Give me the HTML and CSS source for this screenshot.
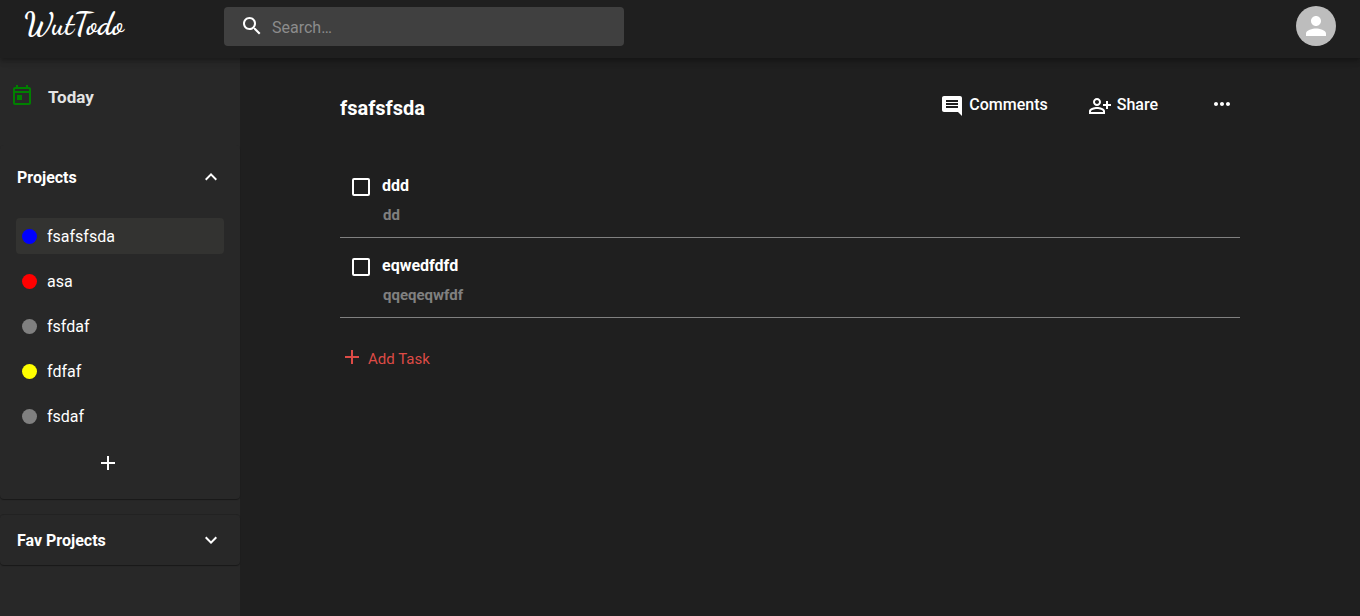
FILE: index.html
```html
<!DOCTYPE html>
<html lang="en">
<head>
<meta charset="utf-8">
<title>WutTodo</title>
<link rel="stylesheet" href="styles.css">
</head>
<body>
<header class="topbar">
  <a class="logo" href="#">WutTodo</a>
  <label class="search">
    <svg class="icon" viewBox="0 0 24 24" aria-hidden="true"><path d="M15.5 14h-.79l-.28-.27C15.41 12.59 16 11.11 16 9.5 16 5.91 13.09 3 9.5 3S3 5.91 3 9.5 5.91 16 9.5 16c1.61 0 3.09-.59 4.23-1.57l.27.28v.79l5 4.99L20.49 19l-4.99-5zm-6 0C7.01 14 5 11.99 5 9.5S7.01 5 9.5 5 14 7.01 14 9.5 11.99 14 9.5 14z"/></svg>
    <input class="search-input" type="text" placeholder="Search…" aria-label="Search">
  </label>
  <button class="avatar" type="button" aria-label="Account">
    <svg class="avatar-icon" viewBox="0 0 24 24" aria-hidden="true"><path d="M12 12c2.21 0 4-1.79 4-4s-1.79-4-4-4-4 1.79-4 4 1.79 4 4 4zm0 2c-2.67 0-8 1.34-8 4v2h16v-2c0-2.66-5.33-4-8-4z"/></svg>
  </button>
</header>
<div class="layout">
  <nav class="sidebar">
    <a class="today" href="#">
      <svg class="icon today-icon" viewBox="0 0 24 24" aria-hidden="true"><path d="M19 3h-1V1h-2v2H8V1H6v2H5c-1.11 0-1.99.9-1.99 2L3 19c0 1.100.89 2 2 2h14c1.100 0 2-.9 2-2V5c0-1.100-.9-2-2-2zm0 16H5V9h14v10zm0-12H5V5h14v2zM7 11h5v5H7z"/></svg>
      <span class="today-label">Today</span>
    </a>
    <section class="panel projects">
      <button class="panel-head" type="button" aria-expanded="true">
        <span class="label">Projects</span>
        <svg class="icon" viewBox="0 0 24 24" aria-hidden="true"><path d="M12 8l-6 6 1.410 1.410L12 10.830l4.590 4.580L18 14z"/></svg>
      </button>
      <div class="project-list">
        <a class="project selected" href="#"><span class="dot blue"></span><span class="label">fsafsfsda</span></a>
        <a class="project" href="#"><span class="dot red"></span><span class="label">asa</span></a>
        <a class="project" href="#"><span class="dot gray"></span><span class="label">fsfdaf</span></a>
        <a class="project" href="#"><span class="dot yellow"></span><span class="label">fdfaf</span></a>
        <a class="project" href="#"><span class="dot gray"></span><span class="label">fsdaf</span></a>
      </div>
      <button class="add-project" type="button" aria-label="Add project">
        <svg class="icon" viewBox="0 0 24 24" aria-hidden="true"><path d="M19 13h-6v6h-2v-6H5v-2h6V5h2v6h6v2z"/></svg>
      </button>
    </section>
    <section class="panel favorites">
      <button class="panel-head" type="button" aria-expanded="false">
        <span class="label">Fav Projects</span>
        <svg class="icon" viewBox="0 0 24 24" aria-hidden="true"><path d="M16.590 8.590L12 13.170 7.410 8.590 6 10l6 6 6-6z"/></svg>
      </button>
    </section>
  </nav>
  <main class="main">
    <div class="project-head">
      <h1 class="title">fsafsfsda</h1>
      <div class="actions">
        <button class="action" type="button">
          <svg class="icon" viewBox="0 0 24 24" aria-hidden="true"><path d="M21.990 4c0-1.100-.89-2-1.990-2H4c-1.100 0-2 .9-2 2v12c0 1.100.9 2 2 2h14l4 4-.01-18zM18 14H6v-2h12v2zm0-3H6V9h12v2zm0-3H6V6h12v2z"/></svg>
          <span>Comments</span>
        </button>
        <button class="action" type="button">
          <svg class="icon" viewBox="0 0 24 24" aria-hidden="true"><path d="M9 12c2.210 0 4-1.790 4-4s-1.790-4-4-4-4 1.790-4 4 1.790 4 4 4zm0-6c1.100 0 2 .9 2 2s-.9 2-2 2-2-.9-2-2 .9-2 2-2zm0 7c-2.670 0-8 1.340-8 4v3h16v-3c0-2.660-5.330-4-8-4zm6 5H3v-.99C3.200 16.290 6.300 15 9 15s5.800 1.290 6 2v1zM20 10V7h-2v3h-3v2h3v3h2v-3h3v-2z"/></svg>
          <span>Share</span>
        </button>
        <button class="more" type="button" aria-label="More options">
          <svg class="more-icon" viewBox="0 0 24 24" aria-hidden="true"><path d="M6 10c-1.100 0-2 .9-2 2s.9 2 2 2 2-.9 2-2-.9-2-2-2zm12 0c-1.100 0-2 .9-2 2s.9 2 2 2 2-.9 2-2-.9-2-2-2zm-6 0c-1.100 0-2 .9-2 2s.9 2 2 2 2-.9 2-2-.9-2-2-2z"/></svg>
        </button>
      </div>
    </div>
    <ul class="tasks">
      <li class="task">
        <input class="check" type="checkbox" id="task-1">
        <div class="task-text">
          <label class="task-name" for="task-1">ddd</label>
          <p class="task-note">dd</p>
        </div>
      </li>
      <li class="task">
        <input class="check" type="checkbox" id="task-2">
        <div class="task-text">
          <label class="task-name" for="task-2">eqwedfdfd</label>
          <p class="task-note">qqeqeqwfdf</p>
        </div>
      </li>
    </ul>
    <button class="add-task" type="button">
      <svg class="icon" viewBox="0 0 24 24" aria-hidden="true"><path d="M19 13h-6v6h-2v-6H5v-2h6V5h2v6h6v2z"/></svg>
      <span class="add-task-label">Add Task</span>
    </button>
  </main>
</div>
</body>
</html>
```
FILE: styles.css
```css
* { box-sizing: border-box; }
body {
  margin: 0;
  min-height: 100vh;
  display: flex;
  flex-direction: column;
  background: #1f1f1f;
  color: #fff;
  font: 400 16px/24px Roboto, sans-serif;
}
a { color: inherit; text-decoration: none; }
button {
  padding: 0;
  border: 0;
  background: none;
  color: inherit;
  font: inherit;
  cursor: pointer;
}
.icon { width: 24px; height: 24px; flex: none; fill: currentColor; }
.label { padding-top: 2px; }

.topbar {
  z-index: 1;
  display: flex;
  align-items: flex-start;
  padding: 6px 24px 12px;
  background: #1f1f1f;
  box-shadow: 0 2px 4px -1px rgba(0,0,0,.2), 0 4px 5px rgba(0,0,0,.14), 0 1px 10px rgba(0,0,0,.12);
}
.logo {
  width: 200px;
  font: 700 30px/36px Satisfy, "Dancing Script", cursive;
}
.search {
  display: flex;
  align-items: center;
  width: 400px;
  height: 39px;
  margin-top: 1px;
  padding: 0 16px;
  gap: 8px;
  border-radius: 4px;
  background: #404040;
}
.search .icon { margin-bottom: 2px; }
.search-input {
  flex: 1;
  min-width: 0;
  padding: 2px 0 0;
  border: 0;
  outline: 0;
  background: none;
  color: #fff;
  font: inherit;
}
.search-input::placeholder { color: #8c8c8c; opacity: 1; }
.avatar {
  display: grid;
  place-items: center;
  width: 40px;
  height: 40px;
  margin-left: auto;
  border-radius: 50%;
  background: #bdbdbd;
}
.avatar-icon { width: 30px; height: 30px; fill: #fff; }

.layout { flex: 1; display: flex; }
.sidebar { width: 240px; flex: none; background: #282828; }
.today {
  display: flex;
  align-items: center;
  gap: 14px;
  padding: 25px 10px 36px;
  font-size: 17px;
  font-weight: 700;
  color: #e4e4e4;
}
.today-label { padding-top: 2px; }
.today-icon { color: #008000; }
.panel {
  background: #282828;
  border-radius: 4px;
  box-shadow: 0 1px 1px rgba(0,0,0,.4);
}
.projects { padding-bottom: 24px; }
.favorites { margin-top: 15px; border-top: 1px solid #222; }
.panel-head {
  display: flex;
  align-items: center;
  justify-content: space-between;
  width: 100%;
  height: 50px;
  padding: 0 17px;
  font-weight: 700;
}
.projects .panel-head { height: 64px; }
.project-list {
  display: flex;
  flex-direction: column;
  gap: 9px;
  padding: 9px 16px 0;
}
.project {
  display: flex;
  align-items: center;
  gap: 10px;
  height: 36px;
  padding: 0 6px;
  border-radius: 4px;
}
.selected { background: #333331; }
.dot { width: 15px; height: 15px; border-radius: 50%; }
.blue { background: #00f; }
.red { background: #f00; }
.gray { background: #808080; }
.yellow { background: #ff0; }
.add-project { display: block; width: 24px; height: 24px; margin: 17px 0 0 96px; }

.main { flex: 1; padding: 26px 120px 0 100px; }
.project-head {
  display: flex;
  align-items: flex-start;
  justify-content: space-between;
}
.title { margin: 12px 0 0; font-size: 20px; line-height: 24px; font-weight: 700; }
.actions { display: flex; align-items: flex-start; padding-top: 9px; gap: 40px; margin-right: 6px; }
.action { display: flex; gap: 5px; font-weight: 500; }
.action .icon { margin-top: 1px; }
.more { height: 24px; margin-left: 12px; margin-top: -1px; }
.more-icon { display: block; width: 24px; height: 24px; fill: #fff; }
.tasks { margin: 38px 0 0; padding: 0; list-style: none; }
.task {
  display: flex;
  align-items: flex-start;
  gap: 12px;
  height: 80px;
  padding: 16px 12px 0;
  border-bottom: 1px solid #808080;
}
.check {
  appearance: none;
  width: 18px;
  height: 18px;
  margin: 4px 0 0;
  border: 2px solid #fff;
  border-radius: 2px;
}
.check:checked { background: #fff; }
.task-name { display: block; font-weight: 700; }
.task-note { margin: 5px 0 0 1px; font-size: 15px; font-weight: 700; color: #808080; }
.add-task {
  display: flex;
  gap: 4px;
  margin-top: 27px;
  color: #dd4b46;
  font-size: 15px;
}
.add-task-label { padding-top: 2px; }
```
